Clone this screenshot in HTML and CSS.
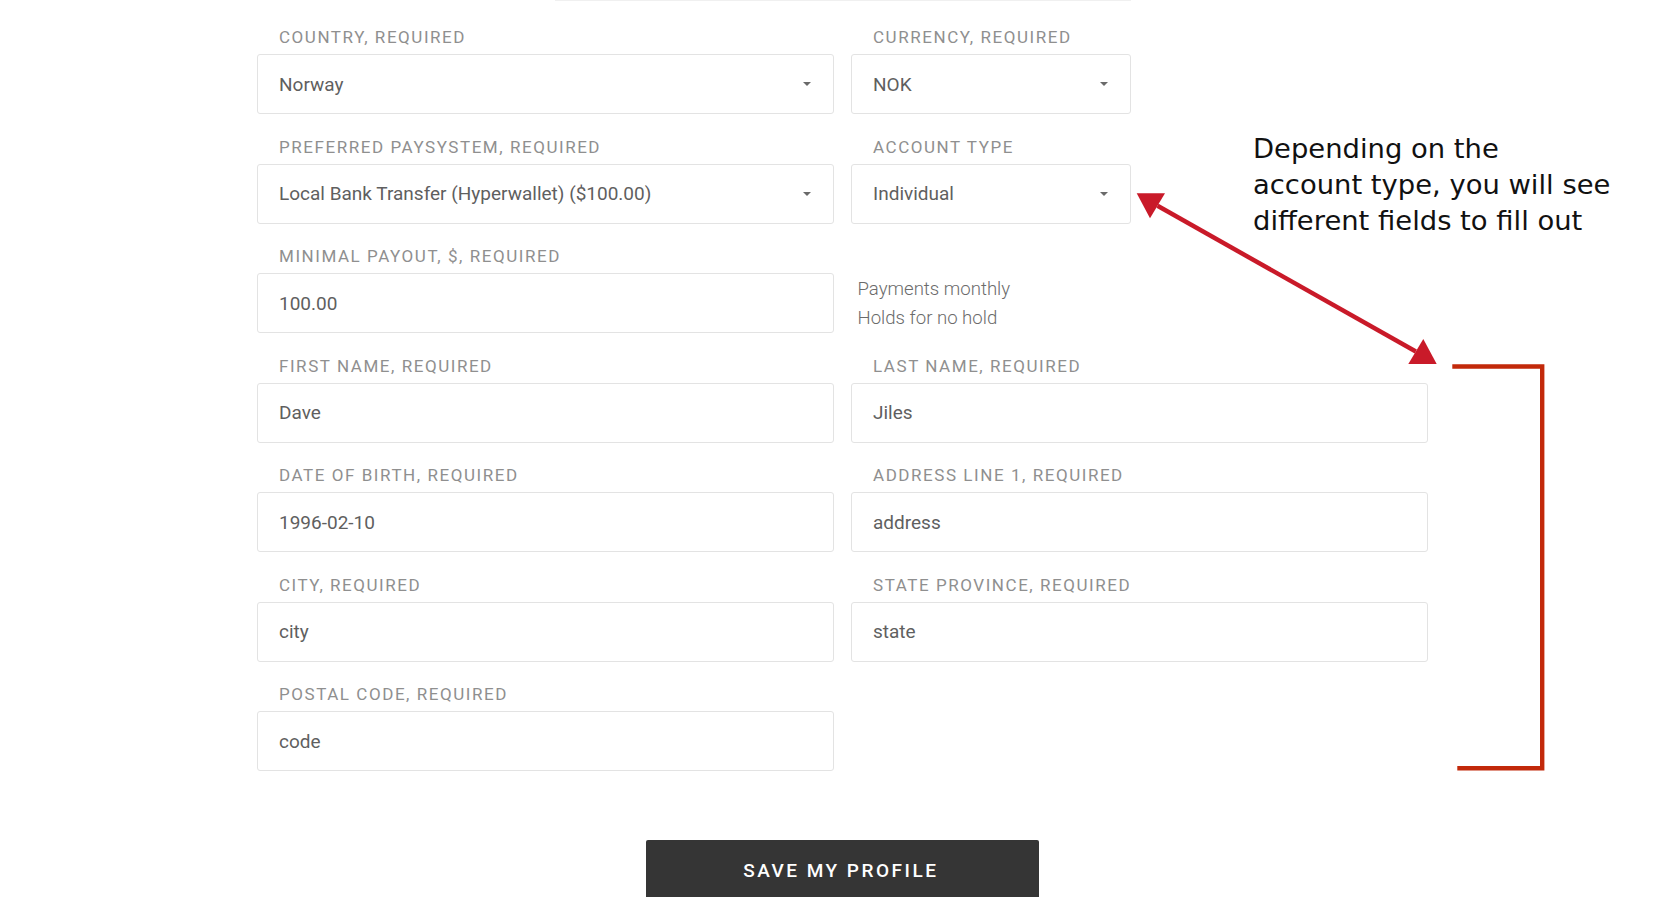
FILE: index.html
```html
<!DOCTYPE html>
<html>
<head>
    <title>Payout profile</title>
    <link rel="stylesheet" href="styles.css">
</head>
<body>
    <div class="page">
        <div class="top-rule"></div>

        <form class="profile-form">
            <div class="form-grid">
                <div class="field">
                    <label>Country, required</label>
                    <div class="select-box">Norway<span class="caret"></span></div>
                </div>
                <div class="field narrow">
                    <label>Currency, required</label>
                    <div class="select-box">NOK<span class="caret"></span></div>
                </div>

                <div class="field">
                    <label>Preferred paysystem, required</label>
                    <div class="select-box">Local Bank Transfer (Hyperwallet) ($100.00)<span class="caret"></span></div>
                </div>
                <div class="field narrow">
                    <label>Account type</label>
                    <div class="select-box">Individual<span class="caret"></span></div>
                </div>

                <div class="field">
                    <label>Minimal payout, $, required</label>
                    <input class="text-box" type="text" value="100.00">
                </div>
                <div class="payout-info">
                    <div>Payments monthly</div>
                    <div>Holds for no hold</div>
                </div>

                <div class="field">
                    <label>First name, required</label>
                    <input class="text-box" type="text" value="Dave">
                </div>
                <div class="field">
                    <label>Last name, required</label>
                    <input class="text-box" type="text" value="Jiles">
                </div>

                <div class="field">
                    <label>Date of birth, required</label>
                    <input class="text-box" type="text" value="1996-02-10">
                </div>
                <div class="field">
                    <label>Address line 1, required</label>
                    <input class="text-box" type="text" value="address">
                </div>

                <div class="field">
                    <label>City, required</label>
                    <input class="text-box" type="text" value="city">
                </div>
                <div class="field">
                    <label>State province, required</label>
                    <input class="text-box" type="text" value="state">
                </div>

                <div class="field">
                    <label>Postal code, required</label>
                    <input class="text-box" type="text" value="code">
                </div>
            </div>

            <div class="actions">
                <button type="button" class="save-btn">Save my profile</button>
            </div>
        </form>

        <!-- annotation layer drawn over the screenshot -->
        <div class="annotation">Depending on the<br>account type, you will see<br>different fields to fill out</div>

        <svg class="marks" width="1676" height="897" viewBox="0 0 1676 897">
            <line x1="1157.5" y1="205.8" x2="1415.8" y2="351.5" stroke="#c91a29" stroke-width="4.5"/>
            <polygon points="1136.7,193.3 1165,193.3 1150,218.3" fill="#c91a29"/>
            <polygon points="1436.7,364 1408.3,364 1423.3,339" fill="#c91a29"/>
            <polyline points="1452.3,366.5 1542.2,366.5 1542.2,768.2 1457.3,768.2" fill="none" stroke="#c2290a" stroke-width="4.4" stroke-linejoin="miter"/>
        </svg>
    </div>
</body>
</html>
```

FILE: styles.css
```css
html, body {
    margin: 0;
    height: 100%;
    background-color: #ffffff;
    overflow: hidden;
}

.page {
    position: relative;
    width: 1676px;
    height: 897px;
    padding-left: 257px;
    box-sizing: border-box;
}

.top-rule {
    margin-left: 298px;
    width: 576px;
    height: 1px;
    background-color: #f0f0f0;
}

.profile-form {
    padding-top: 26px;
    width: 1171px;
}

.form-grid {
    display: grid;
    grid-template-columns: 577px 577px;
    column-gap: 17px;
    row-gap: 22.5px;
}

.field label {
    display: block;
    font-family: Roboto, "Liberation Sans", sans-serif;
    font-size: 17px;
    line-height: 20px;
    letter-spacing: 1.55px;
    text-transform: uppercase;
    color: #8f8f8f;
    padding-left: 22px;
    margin-bottom: 7px;
}

.field.narrow .select-box {
    width: 280px;
}

.select-box,
.text-box {
    display: flex;
    align-items: center;
    justify-content: space-between;
    box-sizing: border-box;
    width: 100%;
    height: 60px;
    margin: 0;
    padding: 0 21px;
    border: 1px solid #e3e3e3;
    border-radius: 3px;
    background-color: #fff;
    font-family: Roboto, "Liberation Sans", sans-serif;
    font-size: 19px;
    color: #5f5f5f;
    outline: none;
}

.caret {
    width: 0;
    height: 0;
    border-left: 4.5px solid transparent;
    border-right: 4.5px solid transparent;
    border-top: 4.5px solid #6a6a6a;
    margin-right: 1px;
}

.payout-info {
    padding: 29px 0 0 6.5px;
    font-family: Roboto, "Liberation Sans", sans-serif;
    font-weight: 300;
    font-size: 18.6px;
    line-height: 29px;
    color: #6b6b6b;
}

.actions {
    margin-top: 69.3px;
    text-align: center;
}

.save-btn {
    width: 393px;
    height: 60px;
    border: none;
    border-radius: 2px;
    background-color: #353535;
    color: #ffffff;
    font-family: Roboto, "Liberation Sans", sans-serif;
    font-weight: 500;
    font-size: 19px;
    letter-spacing: 2.5px;
    padding-left: 2.5px;
    text-transform: uppercase;
    cursor: pointer;
}

.annotation {
    position: absolute;
    left: 1253px;
    top: 130.5px;
    font-family: "DejaVu Sans", sans-serif;
    font-size: 27.4px;
    line-height: 36px;
    color: #111111;
    white-space: nowrap;
}

.marks {
    position: absolute;
    top: 0;
    left: 0;
    pointer-events: none;
}
```
